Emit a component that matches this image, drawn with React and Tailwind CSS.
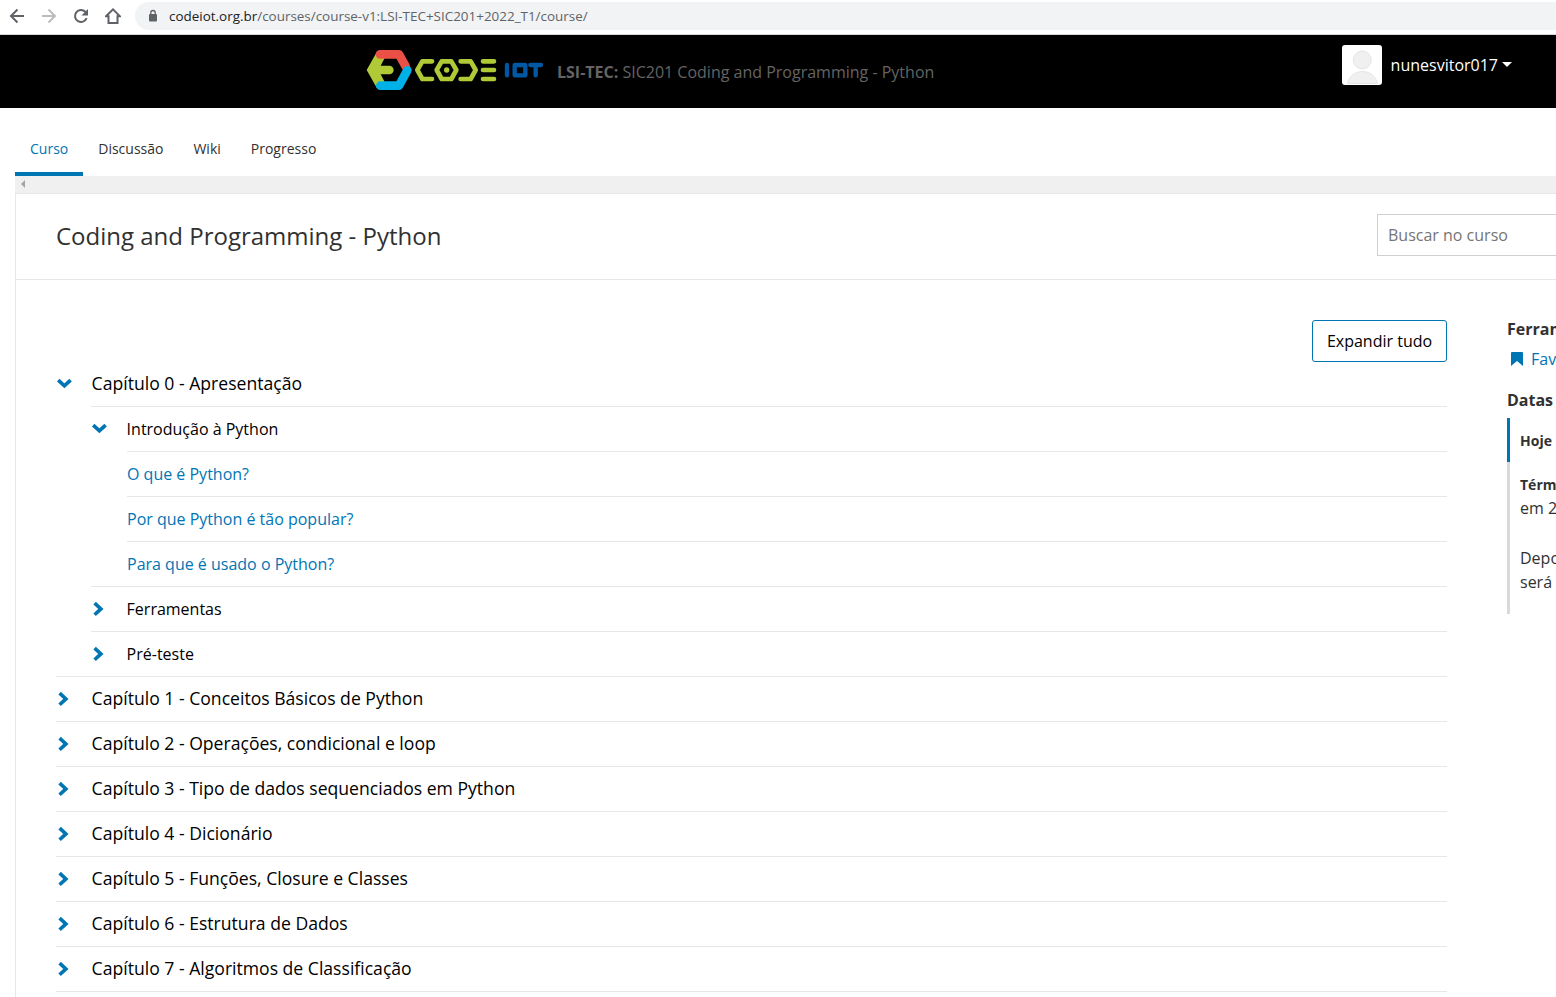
const chapters = [
  "Capítulo 1 - Conceitos Básicos de Python",
  "Capítulo 2 - Operações, condicional e loop",
  "Capítulo 3 - Tipo de dados sequenciados em Python",
  "Capítulo 4 - Dicionário",
  "Capítulo 5 - Funções, Closure e Classes",
  "Capítulo 6 - Estrutura de Dados",
  "Capítulo 7 - Algoritmos de Classificação",
];

const lessons = ["O que é Python?", "Por que Python é tão popular?", "Para que é usado o Python?"];

function Chevron({ open }) {
  return (
    <svg width="16" height="16" viewBox="0 0 16 16" className="shrink-0" fill="none" stroke="#0075b4" strokeWidth="3.6">
      {open ? <polyline points="2.2,4.2 8.4,9.9 14.6,4.2" /> : <polyline points="3.6,2.1 9.9,7.9 3.6,13.7" />}
    </svg>
  );
}

function BrowserBar() {
  return (
    <div className="flex h-[35px] items-start border-b border-[#d5d7da] bg-white">
      <div className="flex h-8 items-center gap-4 pl-[9px]">
        <svg width="16" height="16" viewBox="0 0 16 16" fill="none" stroke="#5f6368" strokeWidth="2">
          <path d="M15 8H2.5M8.5 1.5 2 8l6.500 6.500" />
        </svg>
        <svg width="16" height="16" viewBox="0 0 16 16" fill="none" stroke="#babcbe" strokeWidth="2">
          <path d="M1 8h12.500M7.500 1.500 14 8l-6.500 6.500" />
        </svg>
        <svg width="16" height="16" viewBox="0 0 16 16" fill="none" stroke="#5f6368" strokeWidth="2">
          <path d="M13.600 10.200A6 6 0 1 1 12.300 3.800L13.500 5" />
          <path d="M15 1v6.500H8.500Z" fill="#5f6368" stroke="none" />
        </svg>
        <svg width="16" height="18" viewBox="0 0 16 18" fill="none" stroke="#5f6368" strokeWidth="2">
          <path d="M1 9.300 8 2.300l7 7h-2.500v6.700h-9V9.300Z" />
        </svg>
      </div>
      <div className="mt-0.5 ml-[14px] flex h-7 flex-1 items-center rounded-l-full bg-[#f1f3f4] pl-[13px]">
        <svg width="10" height="14" viewBox="0 0 10 14">
          <rect x="1" y="5" width="8" height="7.500" rx="1" fill="#5f6368" />
          <path d="M2.800 5.500V3.700a2.200 2.200 0 0 1 4.400 0v1.800" fill="none" stroke="#5f6368" strokeWidth="1.300" />
        </svg>
        <span className="ml-[11px] pt-px font-['Open_Sans',sans-serif] text-[13.45px] text-[#5f6368]">
          <span className="text-[#202124]">codeiot.org.br</span>/courses/course-v1:LSI-TEC+SIC201+2022_T1/course/
        </span>
      </div>
    </div>
  );
}

function Logo() {
  return (
    <svg width="190" height="60" viewBox="0 0 570 180" fill="none" strokeLinecap="round" strokeLinejoin="round">
      <path d="M20 90 50 37 76 50 62 77H88a13 13 0 0 1 0 26H62L76 130 50 143Z" fill="#afca36" />
      <polyline points="60,43 117,43 137,79" stroke="#ea5045" strokeWidth="26" />
      <polyline points="61,137 117,137 142,91" stroke="#00b1e7" strokeWidth="26" />
      <g stroke="#afca36" strokeWidth="14">
        <polyline points="216,64 187,64 172,90 187,117 216,117" />
        <polygon points="245,64 274,64 289,90 274,117 245,117 230,90" />
        <circle cx="260" cy="90" r="8" fill="#afca36" stroke="none" />
        <polyline points="302,64 332,64 347,90 332,117 302,117" />
        <path d="M369 64H402M369 90H402M369 117H402" />
      </g>
      <g stroke="#0058a5" strokeWidth="13">
        <path d="M441 75V106M511 75H543M527 75V106" />
        <rect x="464" y="75" width="32" height="31" rx="1" />
      </g>
    </svg>
  );
}

function Header() {
  return (
    <header className="flex h-[73px] items-start bg-black">
      <div className="mt-[5px] ml-[360px] shrink-0"><Logo /></div>
      <div className="mt-[25px] ml-[7px] text-base leading-6 whitespace-nowrap text-[#646464]">
        <b>LSI-TEC:</b> SIC201 Coding and Programming - Python
      </div>
      <div className="mt-[10px] mr-11 ml-auto flex items-center">
        <svg width="40" height="40" viewBox="0 0 40 40">
          <rect width="40" height="40" rx="3" fill="#fff" />
          <g fill="#f0f0f0" stroke="#dfdfdf" strokeWidth=".8">
            <circle cx="20.300" cy="15" r="9" />
            <path d="M5.500 38.500C9 22.500 32 22.500 35.500 38.500Z" />
          </g>
        </svg>
        <span className="ml-[9px] text-base text-white">nunesvitor017</span>
        <span className="ml-1 h-0 w-0 -translate-y-px border-x-[5px] border-t-[5px] border-x-transparent border-t-white" />
      </div>
    </header>
  );
}

function Tabs() {
  return (
    <nav className="flex h-[68px] pl-[15px] text-sm text-[#313131]">
      <span className="border-b-4 border-[#0075b4] px-[15px] pt-[31px] leading-5 text-[#0075b4]">Curso</span>
      <span className="px-[15px] pt-[31px] leading-5">Discussão</span>
      <span className="px-[15px] pt-[31px] leading-5">Wiki</span>
      <span className="px-[15px] pt-[31px] leading-5">Progresso</span>
    </nav>
  );
}

function Chapter({ title }) {
  return (
    <div className="flex h-[45px] items-center border-b border-[#e7e7e7] text-[17.6px] leading-6 text-black">
      <Chevron />
      <span className="ml-[19.6px] pb-0.5">{title}</span>
    </div>
  );
}

function Section({ title, open }) {
  return (
    <div className={open ? "flex h-11 items-center text-base text-black" : "flex h-[45px] items-center border-t border-[#e7e7e7] text-base text-black"}>
      <Chevron open={open} />
      <span className="ml-[19.6px]">{title}</span>
    </div>
  );
}

function Outline() {
  return (
    <main className="w-[1391px] shrink-0">
      <div className="flex justify-end">
        <button className="h-[42px] w-[135px] rounded-[3px] border border-[#0075b4] text-base text-black">Expandir tudo</button>
      </div>
      <div className="flex h-11 items-center text-[17.6px] leading-6 text-black">
        <Chevron open />
        <span className="ml-[19.6px] pb-0.5">Capítulo 0 - Apresentação</span>
      </div>
      <div className="border-b border-[#e7e7e7] pl-[35px]">
        <div className="border-t border-[#e7e7e7]">
          <Section title="Introdução à Python" open />
        </div>
        <div className="pl-9">
          {lessons.map((l) => (
            <div key={l} className="flex h-[45px] items-center border-t border-[#e7e7e7] text-base text-[#0075b4]">{l}</div>
          ))}
        </div>
        <Section title="Ferramentas" />
        <Section title="Pré-teste" />
      </div>
      {chapters.map((c) => <Chapter key={c} title={c} />)}
    </main>
  );
}

function Sidebar() {
  return (
    <aside className="ml-[60px] w-[49px] shrink-0 overflow-hidden whitespace-nowrap text-[#313131]">
      <h2 className="-mt-0.5 text-base leading-[22px] font-bold">Ferramentas</h2>
      <div className="mt-2 flex h-[22px] items-center text-base text-[#0075b4]">
        <svg width="12" height="14" viewBox="0 0 12 14" className="ml-1 shrink-0">
          <path d="M0 1q0-1 1-1h10q1 0 1 1v13L6 9 0 14Z" fill="#0075b4" />
        </svg>
        <span className="ml-2">Favoritos</span>
      </div>
      <h2 className="mt-[19px] text-base leading-[22px] font-bold">Datas</h2>
      <div className="mt-[7px] h-11 border-l-[3px] border-[#0075b4] pl-2.5 text-sm leading-[46px] font-bold">Hoje</div>
      <div className="h-[152px] border-l-[3px] border-[#d9d9d9] pt-[11px] pl-2.5 text-base leading-6">
        <div className="text-sm leading-6 font-bold">Término</div>
        <div className="-mt-px">em 2</div>
        <div className="mt-[26px]">Depois</div>
        <div>será</div>
      </div>
    </aside>
  );
}

export default function App() {
  return (
    <div className="flex h-[997px] w-[1556px] flex-col overflow-hidden bg-white font-['Open_Sans',sans-serif]">
      <BrowserBar />
      <Header />
      <Tabs />
      <div className="ml-[15px] flex h-[17px] shrink-0 items-center bg-[#f0f0f0] pb-px pl-[6px]">
        <span className="h-0 w-0 border-y-[4px] border-r-[4px] border-y-transparent border-r-[#a3a3a3]" />
      </div>
      <div className="ml-[15px] flex-1 border-t border-l border-[#e7e7e7]">
        <div className="flex h-[86px] items-start justify-between border-b border-[#e7e7e7] pl-10">
          <h1 className="mt-[26px] text-2xl leading-8 text-[#313131]">Coding and Programming - Python</h1>
          <div className="mt-5 flex h-[42px] w-[179px] items-center border border-r-0 border-[#d0d0d0] pl-2.5 text-base text-[#757575]">Buscar no curso</div>
        </div>
        <div className="flex pt-10 pl-10">
          <Outline />
          <Sidebar />
        </div>
      </div>
    </div>
  );
}
